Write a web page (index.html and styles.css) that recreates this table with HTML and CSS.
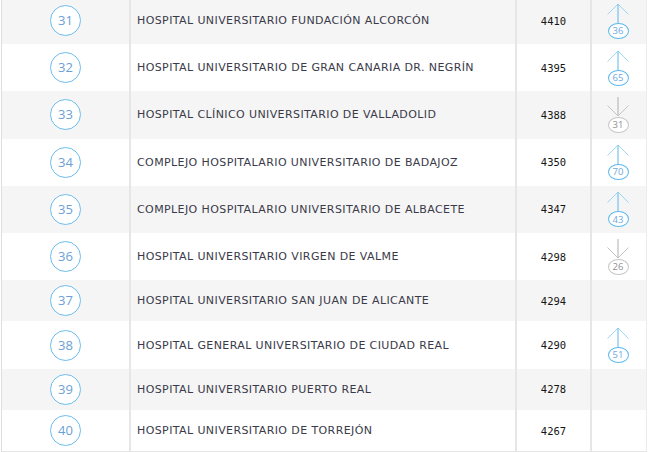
FILE: index.html
```html
<!DOCTYPE html>
<html lang="es">
<head>
<meta charset="utf-8">
<title>Ranking hospitales</title>
<link rel="stylesheet" href="styles.css">
</head>
<body>
<div class="table">
  <div class="row gray tall">
    <div class="rank"><span class="badge">31</span></div>
    <div class="name">HOSPITAL UNIVERSITARIO FUNDACIÓN ALCORCÓN</div>
    <div class="score">4410</div>
    <div class="trend up"><svg class="arrow" viewBox="0 0 22 20" width="22" height="20"><path class="head" d="M0.5 11.5 L11 1 L21.5 11.5"/><path class="shaft" d="M11 1.5 V20"/></svg><span class="pill">36</span></div>
  </div>
  <div class="row tall">
    <div class="rank"><span class="badge">32</span></div>
    <div class="name">HOSPITAL UNIVERSITARIO DE GRAN CANARIA DR. NEGRÍN</div>
    <div class="score">4395</div>
    <div class="trend up"><svg class="arrow" viewBox="0 0 22 20" width="22" height="20"><path class="head" d="M0.5 11.5 L11 1 L21.5 11.5"/><path class="shaft" d="M11 1.5 V20"/></svg><span class="pill">65</span></div>
  </div>
  <div class="row gray tall">
    <div class="rank"><span class="badge">33</span></div>
    <div class="name">HOSPITAL CLÍNICO UNIVERSITARIO DE VALLADOLID</div>
    <div class="score">4388</div>
    <div class="trend down"><svg class="arrow" viewBox="0 0 22 20" width="22" height="20"><path class="head" d="M0.5 8.5 L11 19 L21.5 8.5"/><path class="shaft" d="M11 0 V18.5"/></svg><span class="pill">31</span></div>
  </div>
  <div class="row tall">
    <div class="rank"><span class="badge">34</span></div>
    <div class="name">COMPLEJO HOSPITALARIO UNIVERSITARIO DE BADAJOZ</div>
    <div class="score">4350</div>
    <div class="trend up"><svg class="arrow" viewBox="0 0 22 20" width="22" height="20"><path class="head" d="M0.5 11.5 L11 1 L21.5 11.5"/><path class="shaft" d="M11 1.5 V20"/></svg><span class="pill">70</span></div>
  </div>
  <div class="row gray tall">
    <div class="rank"><span class="badge">35</span></div>
    <div class="name">COMPLEJO HOSPITALARIO UNIVERSITARIO DE ALBACETE</div>
    <div class="score">4347</div>
    <div class="trend up"><svg class="arrow" viewBox="0 0 22 20" width="22" height="20"><path class="head" d="M0.5 11.5 L11 1 L21.5 11.5"/><path class="shaft" d="M11 1.5 V20"/></svg><span class="pill">43</span></div>
  </div>
  <div class="row tall">
    <div class="rank"><span class="badge">36</span></div>
    <div class="name">HOSPITAL UNIVERSITARIO VIRGEN DE VALME</div>
    <div class="score">4298</div>
    <div class="trend down"><svg class="arrow" viewBox="0 0 22 20" width="22" height="20"><path class="head" d="M0.5 8.5 L11 19 L21.5 8.5"/><path class="shaft" d="M11 0 V18.5"/></svg><span class="pill">26</span></div>
  </div>
  <div class="row gray short">
    <div class="rank"><span class="badge">37</span></div>
    <div class="name">HOSPITAL UNIVERSITARIO SAN JUAN DE ALICANTE</div>
    <div class="score">4294</div>
    <div class="trend"></div>
  </div>
  <div class="row tall">
    <div class="rank"><span class="badge">38</span></div>
    <div class="name">HOSPITAL GENERAL UNIVERSITARIO DE CIUDAD REAL</div>
    <div class="score">4290</div>
    <div class="trend up"><svg class="arrow" viewBox="0 0 22 20" width="22" height="20"><path class="head" d="M0.5 11.5 L11 1 L21.5 11.5"/><path class="shaft" d="M11 1.5 V20"/></svg><span class="pill">51</span></div>
  </div>
  <div class="row gray short">
    <div class="rank"><span class="badge">39</span></div>
    <div class="name">HOSPITAL UNIVERSITARIO PUERTO REAL</div>
    <div class="score">4278</div>
    <div class="trend"></div>
  </div>
  <div class="row short">
    <div class="rank"><span class="badge">40</span></div>
    <div class="name">HOSPITAL UNIVERSITARIO DE TORREJÓN</div>
    <div class="score">4267</div>
    <div class="trend"></div>
  </div>
</div>
</body>
</html>
```
FILE: styles.css
```css
html, body {
  margin: 0;
  padding: 0;
  background: #ffffff;
}

body {
  width: 650px;
  height: 452px;
  overflow: hidden;
  font-family: "DejaVu Sans", "Open Sans", sans-serif;
}

.table {
  margin: -3px 0 0 1px;
  width: 644px;
  border-left: 1px solid #dedede;
  border-right: 1px solid #ececec;
  border-bottom: 1px solid #e6e6e6;
}

.row {
  display: grid;
  grid-template-columns: 127px 386px 75px 56px;
  background: #ffffff;
}

.row.gray {
  background: #f5f5f5;
}

.row.tall {
  height: 47.2px;
}

.row.short {
  height: 41.3px;
}

.row > div {
  display: flex;
  align-items: center;
  min-width: 0;
}

.name,
.score,
.trend {
  border-left: 2px solid #e6e6e6;
}

.rank {
  justify-content: center;
}

.badge {
  box-sizing: border-box;
  width: 31px;
  height: 31px;
  border: 1.5px solid #6cbdee;
  border-radius: 50%;
  display: flex;
  align-items: center;
  justify-content: center;
  font-family: "Open Sans", sans-serif;
  font-size: 13px;
  color: #6b9fd6;
  background: #ffffff;
  line-height: 1;
}

.name {
  padding-left: 6px;
  font-size: 11px;
  letter-spacing: 0.4px;
  color: #3a3a4a;
  white-space: nowrap;
}

.score {
  justify-content: center;
  font-family: "DejaVu Sans Mono", monospace;
  font-size: 10.5px;
  color: #151515;
}

.trend {
  flex-direction: column;
  justify-content: center;
  align-items: center;
  padding-right: 2px;
}

.arrow {
  display: block;
  fill: none;
  stroke-width: 1;
}

.up .head { stroke: #9fd6f2; }
.up .shaft { stroke: #5cb8ec; }
.down .head { stroke: #c4c4c4; }
.down .shaft { stroke: #b0b0b0; }

.pill {
  box-sizing: border-box;
  width: 21px;
  height: 16px;
  border-radius: 50%;
  display: flex;
  align-items: center;
  justify-content: center;
  font-family: "Open Sans", sans-serif;
  font-size: 9.5px;
  line-height: 1;
  background: #ffffff;
}

.up .pill {
  border: 1px solid #5cb8ec;
  color: #6fa8dc;
}

.down .pill {
  border: 1px solid #c6c6c6;
  color: #909090;
}
```
